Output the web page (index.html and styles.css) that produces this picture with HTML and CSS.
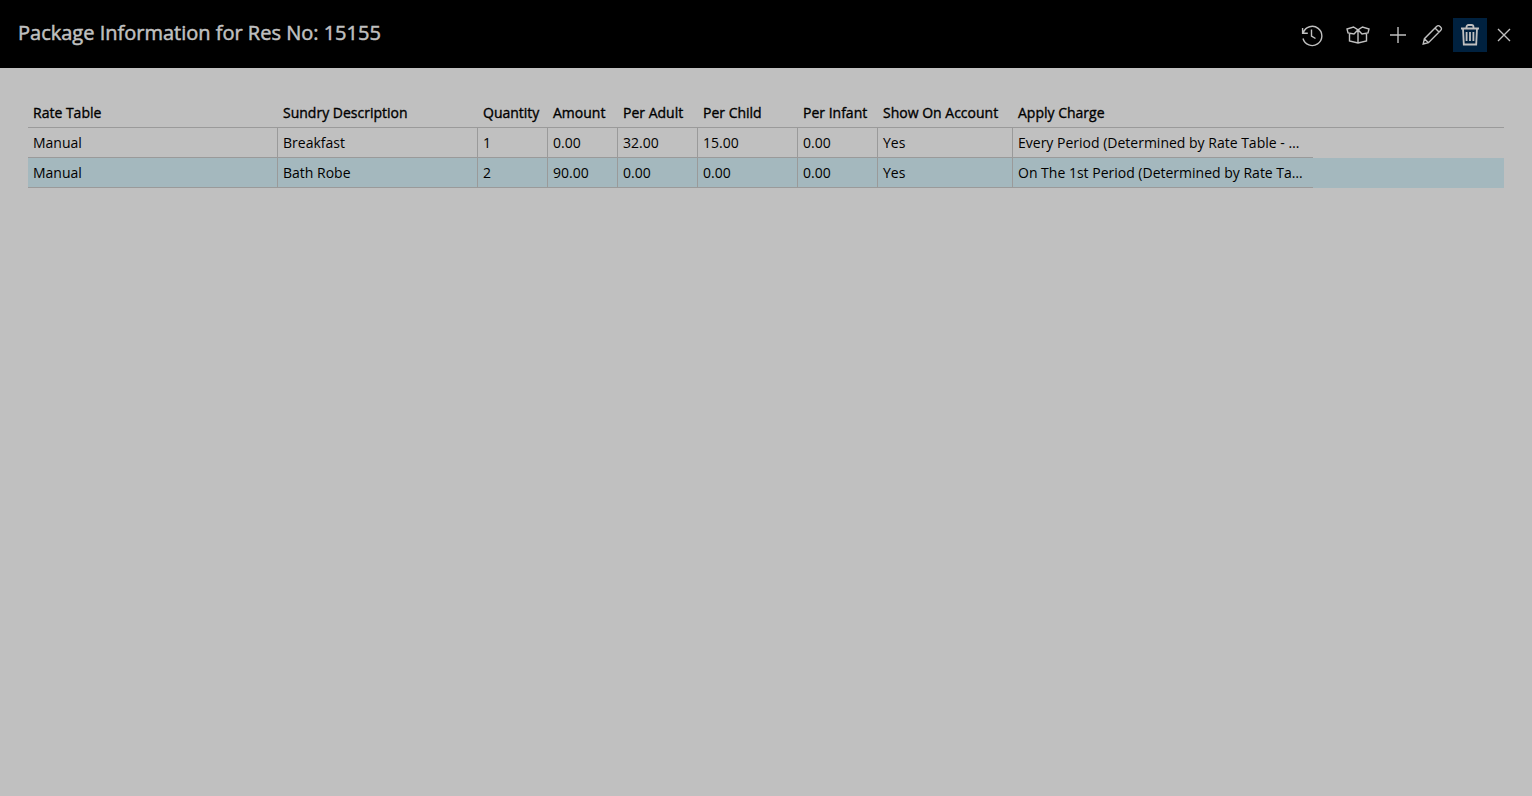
FILE: index.html
```html
<!DOCTYPE html>
<html lang="en">
<head>
<meta charset="utf-8">
<title>Package Information</title>
<link rel="stylesheet" href="styles.css">
</head>
<body>
<header class="bar">
  <h1 class="title">Package Information for Res No: 15155</h1>
  <div class="tools">
    <button class="tool t-history"><svg width="24" height="24" viewBox="0 0 24 24"><path d="M2.600 5v5.200h5.200M3.200 9.800A9.600 9.600 0 1 1 3 15.500M11.500 6.500v6.500l4 2.500"/></svg></button>
    <button class="tool t-box"><svg width="24" height="18" viewBox="0 0 24 18"><path d="M3.500 7v8l8.500 2 8.500-2V7M12 5v12M12 3.800 7.500 1 1 3l1 4 6 1ZM12 3.800 16.500 1 23 3l-1 4-6 1Z"/></svg></button>
    <button class="tool t-plus"><svg width="20" height="20" viewBox="0 0 20 20"><path d="M10 2v16M2 10h16"/></svg></button>
    <button class="tool t-pencil"><svg width="24" height="24" viewBox="0 0 24 24"><path d="M3.200 21l1.200-5.300L16.800 3.300a2 2 0 0 1 3 0l1 1a2 2 0 0 1 0 3L8.500 19.700ZM4.400 15.700l4.100 4M15 5.100l4 4"/></svg></button>
    <button class="tool t-trash is-active"><svg width="24" height="24" viewBox="0 0 24 24"><path d="M3 5.500h18M5 5.500 5.800 21.500h12.400l.8-16M8.500 5.500V4a2 2 0 0 1 2-2h3a2 2 0 0 1 2 2v1.500M8.600 9v9M12 9v9M15.400 9v9"/></svg></button>
    <button class="tool t-close"><svg width="16" height="16" viewBox="0 0 16 16"><path d="M2 2l12 12M14 2 2 14"/></svg></button>
  </div>
</header>
<main class="content">
  <div class="grid">
    <div class="row head">
      <div class="cell c1">Rate Table</div><div class="cell c2">Sundry Description</div><div class="cell c3">Quantity</div><div class="cell c4">Amount</div><div class="cell c5">Per Adult</div><div class="cell c6">Per Child</div><div class="cell c7">Per Infant</div><div class="cell c8">Show On Account</div><div class="cell c9">Apply Charge</div>
    </div>
    <div class="row">
      <div class="cell c1">Manual</div><div class="cell c2">Breakfast</div><div class="cell c3">1</div><div class="cell c4">0.00</div><div class="cell c5">32.00</div><div class="cell c6">15.00</div><div class="cell c7">0.00</div><div class="cell c8">Yes</div><div class="cell c9">Every Period (Determined by Rate Table - …</div>
    </div>
    <div class="row selected">
      <div class="cell c1">Manual</div><div class="cell c2">Bath Robe</div><div class="cell c3">2</div><div class="cell c4">90.00</div><div class="cell c5">0.00</div><div class="cell c6">0.00</div><div class="cell c7">0.00</div><div class="cell c8">Yes</div><div class="cell c9">On The 1st Period (Determined by Rate Ta…</div>
    </div>
  </div>
</main>
</body>
</html>
```
FILE: styles.css
```css
* { box-sizing: border-box; }
html, body { height: 100%; }
body {
  margin: 0;
  background: #c0c0c0;
  color: #000;
  font-family: "Open Sans", "Liberation Sans", sans-serif;
  font-size: 14px;
  overflow: hidden;
}
.bar {
  height: 68px;
  background: #000;
  display: flex;
  align-items: center;
  justify-content: space-between;
  padding: 0 11px 0 18px;
}
.title {
  margin: 0 0 3px;
  font-size: 20px;
  font-weight: 400;
  -webkit-text-stroke: 0.5px #c0c0c0;
  color: #c0c0c0;
}
.tools { display: flex; align-items: center; height: 34px; margin-top: 2px; }
.tool {
  background: none;
  border: 0;
  padding: 0;
  height: 34px;
  display: flex;
  align-items: center;
  justify-content: center;
}
.tool svg { fill: none; stroke: #c0c0c0; stroke-width: 1.4; display: block; }
.t-history { width: 34px; }
.t-box { width: 34px; margin-left: 12px; }
.t-plus { width: 34px; margin-left: 6px; }
.t-pencil { width: 34px; }
.t-trash { width: 34px; margin-left: 4px; }
.t-trash svg { stroke-width: 1.8; }
.t-close { width: 34px; }
.is-active { background: #00213f; }
.content { padding: 30px 28px 0; }
.row { display: flex; height: 30px; }
.row.selected { background: #a4b8be; }
.head { -webkit-text-stroke: 0.35px #000; border-bottom: 1px solid #9a9a9a; }
.cell {
  padding: 0 5px;
  line-height: 29px;
  white-space: nowrap;
  overflow: hidden;
}
.row:not(.head) .cell { border-bottom: 1px solid #9a9a9a; border-right: 1px solid #9a9a9a; }
.row:not(.head) .c9 { border-right: 0; }
.c1 { width: 250px; }
.c2 { width: 200px; }
.c3 { width: 70px; }
.c4 { width: 70px; }
.c5 { width: 80px; }
.c6 { width: 100px; }
.c7 { width: 80px; }
.c8 { width: 135px; }
.c9 { width: 300px; }
```
